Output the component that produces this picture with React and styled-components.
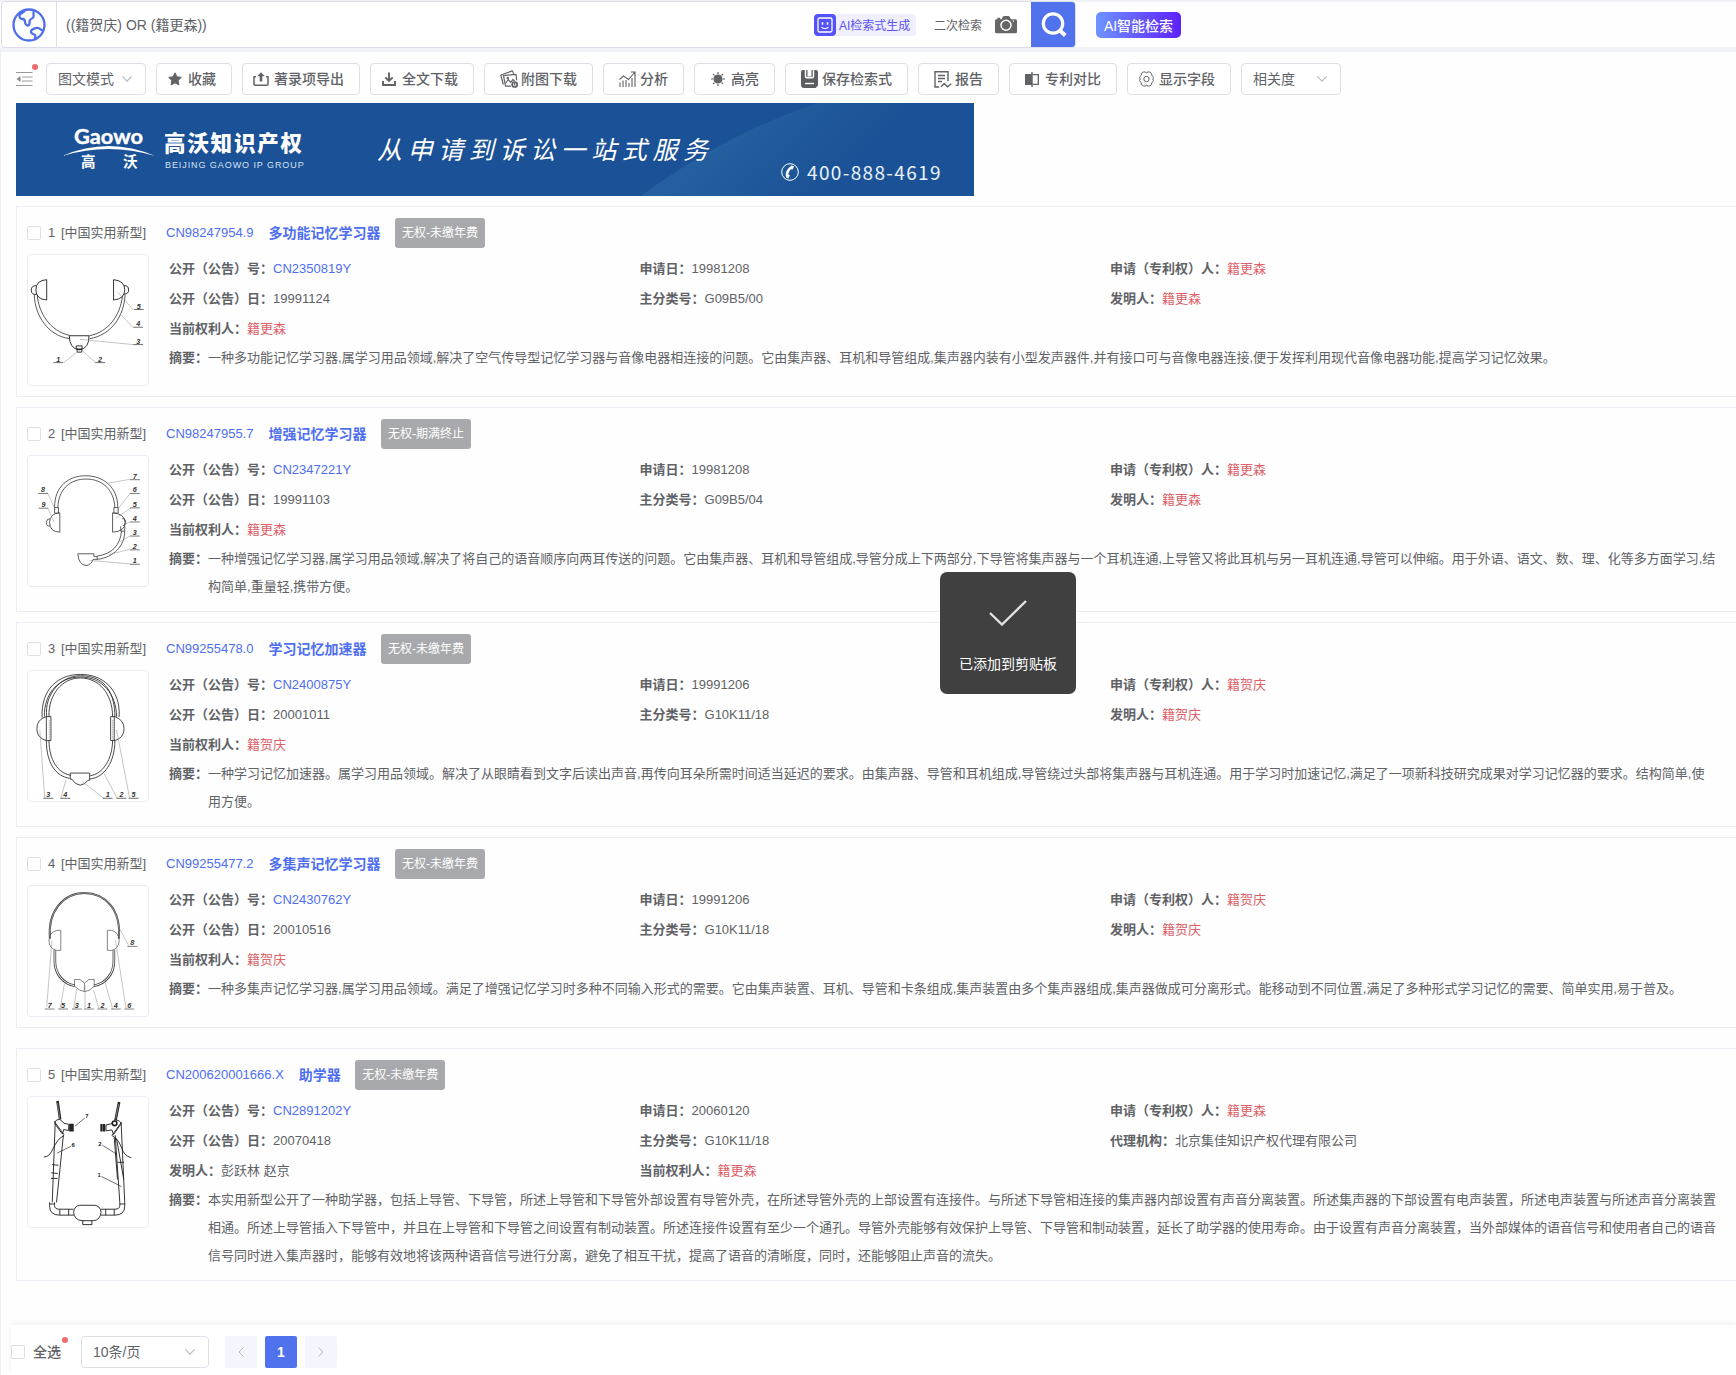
import React from "react";
import styled, { createGlobalStyle } from "styled-components";

const sans = `"Liberation Sans", Arial, "Noto Sans CJK SC", sans-serif`;

const GlobalStyle = createGlobalStyle`
  * { box-sizing: border-box; }
  body { margin: 0; background: #fff; font-family: ${sans}; color: #606266; font-size: 13px; }
`;

const Page = styled.div`
  width: 1736px;
  height: 1375px;
  overflow: hidden;
  position: relative;
  display: flex;
  flex-direction: column;
  background: #fefefe;
`;

/* ---------- search header ---------- */

const Header = styled.header`
  height: 52px;
  flex: none;
  display: flex;
  align-items: flex-start;
  padding: 1px 0 0 1px;
  background: linear-gradient(#f0f1f5 2px, #fefefe 2px, #fefefe 47px, #f1f2f6 47px);
`;

const SearchBox = styled.div`
  width: 1075px;
  height: 47px;
  display: flex;
  align-items: center;
  border: 1px solid #dcdfe9;
  border-radius: 4px;
  background: #fff;
  overflow: hidden;
`;

const GlobeCell = styled.div`
  width: 55px;
  height: 45px;
  flex: none;
  display: flex;
  align-items: center;
  justify-content: center;
  border-right: 1px solid #dcdfe6;
`;

const Query = styled.div`
  flex: 1;
  padding-left: 9px;
  padding-bottom: 1px;
  font-size: 14px;
`;

const AiBadge = styled.div`
  width: 102px;
  height: 22px;
  display: flex;
  align-items: center;
  gap: 3px;
  border-radius: 4px;
  background: #f0effe;
  color: #5a52f5;
  font-size: 12px;
  white-space: nowrap;
`;

const AiLabel = styled.span`
  padding-bottom: 1px;
`;

const SecondSearch = styled.div`
  margin-left: 18px;
  width: 61px;
  font-size: 12px;
  padding-bottom: 1px;
`;

const SearchButton = styled.button`
  width: 44px;
  height: 45px;
  margin-left: 14px;
  padding: 0 0 0 2px;
  border: 0;
  display: flex;
  align-items: center;
  justify-content: center;
  background: #5072ec;
`;

const SmartButton = styled.button`
  width: 85px;
  height: 26px;
  margin: 11px 0 0 20px;
  padding: 0 0 1px;
  border: 0;
  border-radius: 5px;
  color: #fff;
  font: 500 14px ${sans};
  background: linear-gradient(90deg, #6d93ff, #5e21fa);
`;

/* ---------- toolbar ---------- */

const Body = styled.div`
  flex: 1;
  display: flex;
  flex-direction: column;
  border-left: 1px solid #f0f1f5;
`;

const Toolbar = styled.div`
  height: 32px;
  margin: 11px 0 8px 15px;
  display: flex;
  gap: 10px;
`;

const Collapse = styled.div`
  width: 20px;
  position: relative;
  display: flex;
  align-items: center;
`;

const Dot = styled.i`
  position: absolute;
  width: 6px;
  height: 6px;
  border-radius: 50%;
  background: #ee6b6b;
  right: ${(p) => p.$right}px;
  top: ${(p) => p.$top}px;
`;

const ToolButton = styled.button`
  width: ${(p) => p.$w}px;
  height: 32px;
  padding: 0 0 0 ${(p) => p.$pad - 1}px;
  display: flex;
  align-items: center;
  border: 1px solid #dcdfe6;
  border-radius: 4px;
  background: #fff;
  color: #606266;
  font: ${(p) => (p.$plain ? 400 : 500)} 14px ${sans};
  white-space: nowrap;
  svg { flex: none; }
`;

const ToolLabel = styled.span`
  margin-left: ${(p) => p.$gap || 0}px;
  margin-right: ${(p) => p.$end || 0}px;
  padding-bottom: 2px;
`;

/* ---------- banner ---------- */

const Banner = styled.div`
  width: 958px;
  height: 93px;
  margin: 0 0 10px 15px;
  position: relative;
  display: flex;
  color: #fff;
  background: #1b5196;
  flex: none;
`;

const BannerSweep = styled.svg`
  position: absolute;
  inset: 0;
`;

const LogoBlock = styled.div`
  width: 102px;
  margin-left: 46px;
  padding-top: 16px;
  position: relative;
`;

const Brand = styled.div`
  width: 213px;
  padding-top: 26px;
  position: relative;
`;

const BrandName = styled.div`
  font: 900 21.500px/30px ${sans};
  letter-spacing: 1.8px;
  white-space: nowrap;
`;

const BrandSub = styled.div`
  padding-left: 1px;
  font-size: 9px;
  line-height: 12px;
  letter-spacing: 0.92px;
  color: #d5e2f2;
  white-space: nowrap;
`;

const Slogan = styled.div`
  width: 404px;
  padding-top: 29px;
  position: relative;
  font: italic 400 25px/36px ${sans};
  letter-spacing: 5.6px;
  white-space: nowrap;
`;

const Phone = styled.div`
  position: relative;
  align-self: flex-end;
  height: 49px;
  display: flex;
  align-items: center;
  gap: 8px;
  font: 400 19px "Noto Sans CJK SC", sans-serif;
  letter-spacing: 1.35px;
  color: #eaf3fb;
`;

/* ---------- result cards ---------- */

const Card = styled.article`
  margin: 0 0 ${(p) => p.$after || 10}px 15px;
  padding: 11px 0 10px 10px;
  border: 1px solid #ebeef5;
  border-right: 0;
`;

const CardHead = styled.div`
  height: 30px;
  display: flex;
  align-items: center;
  white-space: nowrap;
`;

const Checkbox = styled.span`
  width: 14px;
  height: 14px;
  flex: none;
  border: 1px solid #dcdfe6;
  border-radius: 2px;
  background: #fff;
`;

const Index = styled.span`
  width: 13px;
  margin-left: 7px;
  margin-top: -2px;
`;

const Kind = styled.span`
  width: 105px;
  margin-top: -4px;
`;

const Link = styled.span`
  color: #4e6ef2;
  ${(p) => p.$head && "margin: -2px 15px 0 0;"}
`;

const Title = styled.span`
  color: #4e6ef2;
  font-size: 14px;
  font-weight: 700;
  margin: -2px 14.5px 0 0;
`;

const Status = styled.span`
  width: 90px;
  height: 30px;
  border-radius: 3px;
  background: #a8a9ac;
  color: #fff;
  font-size: 12px;
  line-height: 30px;
  text-align: center;
`;

const CardBody = styled.div`
  display: flex;
  align-items: flex-start;
  margin-top: 6px;
`;

const Thumb = styled.svg`
  width: 122px;
  height: 132px;
  flex: none;
  border: 1px solid #ebeef5;
  border-radius: 4px;
  background: #fff;
`;

const Info = styled.div`
  flex: 1;
  padding-left: 20px;
`;

const Fields = styled.div`
  display: grid;
  grid-template-columns: 470.5px 470.5px 1fr;
  grid-auto-rows: 30px;
  line-height: 30px;
`;

const Field = styled.div`
  white-space: nowrap;
`;

const Label = styled.b`
  font-weight: 700;
`;

const Mark = styled.span`
  color: #dd5f68;
`;

const Abstract = styled.div`
  display: flex;
  line-height: 28px;
`;

const AbstractText = styled.div`
  white-space: pre;
`;

/* ---------- footer ---------- */

const Footer = styled.footer`
  margin: auto 0 0 10px;
  height: 50px;
  padding-top: 11px;
  display: flex;
  align-items: flex-start;
  background: #fff;
  box-shadow: 0 -2px 5px rgba(0, 0, 0, 0.06);
`;

const SelectAll = styled.div`
  width: 70px;
  height: 32px;
  position: relative;
  display: flex;
  align-items: center;
  gap: 8px;
  font-size: 14px;
  font-weight: 500;
`;

const FooterLabel = styled.span`
  padding-bottom: 2px;
`;

const PageSize = styled.div`
  width: 128px;
  height: 32px;
  padding: 0 13px 0 11px;
  margin-right: 16px;
  display: flex;
  align-items: center;
  justify-content: space-between;
  border: 1px solid #dcdfe6;
  border-radius: 4px;
  font-size: 14px;
`;

const PageButton = styled.button`
  width: 32px;
  height: 32px;
  margin-right: 8px;
  padding: 0;
  border: 0;
  border-radius: 2px;
  display: flex;
  align-items: center;
  justify-content: center;
  background: ${(p) => (p.$active ? "#5072ec" : "#f4f6fd")};
  color: #fff;
  font: 700 14px ${sans};
`;

const Toast = styled.div`
  position: absolute;
  left: 940px;
  top: 572px;
  width: 136px;
  height: 122px;
  padding-top: 28px;
  display: flex;
  flex-direction: column;
  align-items: center;
  gap: 28px;
  border-radius: 7px;
  background: #404040;
  color: #fff;
  font-size: 14px;
  line-height: 20px;
`;

/* ---------- icons ---------- */

const Chevron = () => (
  <svg width="10" height="6" viewBox="0 0 10 6" fill="none" stroke="#b4b8c0" strokeWidth="1.1"><path d="M.4.4 5 5.2 9.6.4" /></svg>
);

const Globe = () => (
  <svg width="34" height="34" viewBox="0 0 34 34" fill="none" stroke="#4e6eea" strokeWidth="2.3" strokeLinejoin="round" strokeLinecap="round">
    <circle cx="17" cy="17" r="15.5" />
    <path d="M12.500 2.800c-1.500 2.200-4.500 2.700-5 4.700-.5 2.200 1.200 3.500 3.500 3.500 2 0 1.800 1.500 2 3.500.2 1.900 2.300 3.500 3.800 2.800 1.300-.7.300-3 .9-4.800.6-1.700 4-1.900 4-4.500 0-2-1.300-3 .5-5" />
    <path d="M31 22.500c-2.200.2-2.800-3-6-2.600-3.300.5-6.300 1.800-6 4.300.3 2.400 3.700 1.400 4.300 3.300.5 1.600-.7 2.200-.5 3.700" />
  </svg>
);

const RobotIcon = () => (
  <svg width="22" height="22" viewBox="0 0 22 22" fill="none" stroke="#fff">
    <rect width="22" height="22" rx="4" fill="#5352fb" stroke="none" />
    <rect x="4" y="4" width="14" height="14" rx="1.5" strokeWidth="1.300" />
    <path d="M8.500 8.200v2.600M13.500 8.200v2.600" strokeWidth="1.600" />
    <path d="M7.500 13.200q3.500 2.600 7 0" strokeWidth="1.200" />
  </svg>
);

const CameraIcon = () => (
  <svg width="22" height="18" viewBox="0 0 22 18">
    <path fill="#666" d="M1.500 3.200h.8V1.800h2.900v1.400h1.300L8 .6q.3-.6 1-.6h4.500q.7 0 1 .6l1.500 2.600h4.500q1.500 0 1.500 1.500v11.100q0 1.500-1.500 1.500h-19Q0 17.300 0 15.800V4.700q0-1.500 1.500-1.500z" />
    <circle cx="11" cy="9.300" r="5" fill="none" stroke="#fff" strokeWidth="1.500" />
    <circle cx="18.300" cy="5" r=".8" fill="#fff" />
  </svg>
);

const MagnifierIcon = () => (
  <svg width="26" height="26" viewBox="0 0 26 26" fill="none" stroke="#fff" strokeWidth="3.200">
    <circle cx="12" cy="11.500" r="9.700" /><path d="m18.800 18.500 5.500 5" strokeWidth="4" />
  </svg>
);

const CollapseIcon = () => (
  <svg width="17" height="16" viewBox="0 0 17 16" fill="none" stroke="#999" strokeWidth="1.100">
    <path d="M0 1.500h16.500M6 6h10.500M6 10h10.500M0 14.500h16.500" /><path d="M4.500 5 .5 8l4 3z" fill="#888" stroke="none" />
  </svg>
);

const icons = {
  star: (
    <svg width="14" height="14" viewBox="0 0 14 14"><path fill="#606266" stroke="#606266" strokeLinejoin="round" d="m7 .8 1.900 4 4.400.6-3.200 3 .8 4.500L7 10.800l-3.900 2.100.8-4.500-3.200-3 4.400-.6z" /></svg>
  ),
  exportBox: (
    <svg width="16" height="14" viewBox="0 0 16 14" fill="none" stroke="#606266" strokeWidth="1.500" strokeLinejoin="round">
      <path d="M3 4.700H1v7.500q0 1 1 1h12q1 0 1-1V4.700h-2" /><path d="M8 9.500V3" strokeWidth="2.600" /><path d="M4.300 4.200 8 .2l3.700 4z" fill="#606266" stroke="none" />
    </svg>
  ),
  download: (
    <svg width="14" height="14" viewBox="0 0 14 14" fill="none" stroke="#606266" strokeWidth="1.900">
      <path d="M1 9v4h12V9M7 .500v8M3.300 5.300 7 9l3.700-3.700" />
    </svg>
  ),
  images: (
    <svg width="18" height="18" viewBox="0 0 18 18" fill="none" stroke="#606266" strokeWidth="1.200" strokeLinejoin="round">
      <path d="M3.300 14.500.8 5 3.500 4.300M3.500 4 12.500.9l1.200 3" />
      <path d="M11 16.200H5.500l-2-10.500L16 4.300l.7 6" />
      <path d="m5.500 13.500 2.700-4 2.500 2.800 2.300-2.800 1.500 1.500" /><circle cx="7.700" cy="8" r=".6" />
      <circle cx="14.700" cy="14.500" r="2.500" strokeWidth="1.700" /><path d="M14.700 12v3.500" />
    </svg>
  ),
  chart: (
    <svg width="17" height="17" viewBox="0 0 17 17" fill="none" stroke="#606266" strokeWidth="1.100">
      <path d="M1 16v-4.500M4 16V9.500M7 16V9M10 16v-4M13 16V7M16 16V4.500" /><path d="M.500 8.500 4.500 5l5 3.500L15.500 1.500M12 1h4v4" />
    </svg>
  ),
  sun: (
    <svg width="14" height="14" viewBox="0 0 14 14" stroke="#606266" strokeWidth="1.200">
      <circle cx="7" cy="7" r="4" fill="#606266" /><path d="M7 0v2M7 12v2M0 7h2M12 7h2M2 2l1.400 1.400M10.600 10.600 12 12M2 12l1.400-1.400M10.600 3.400 12 2" />
    </svg>
  ),
  save: (
    <svg width="17" height="18" viewBox="0 0 17 18"><path fill="#5c5e63" d="M2 0h1.800v6.500q0 2 2 2h5.400q2 0 2-2V0H15q2 0 2 2v13.500L14.500 18H3q-3 0-3-3V2q0-2 2-2z" /><path fill="#5c5e63" d="M5.200 0h1.300v6.300h4V0h1.300v6.700H5.200z" /><path d="M4 13.500h9" stroke="#fff" strokeWidth="1.400" /></svg>
  ),
  report: (
    <svg width="18" height="17" viewBox="0 0 18 17" fill="none" stroke="#606266" strokeWidth="1.400">
      <path d="M5 16H1V.8h13V10M4 4.500h7M4 7.500h7M4 10.500h4" /><path d="m7 15.800 3.200-3.300 3.300 3.300 3.800-3" />
    </svg>
  ),
  compare: (
    <svg width="14" height="15" viewBox="0 0 14 15"><path fill="#606266" d="M0 2h6.300V0h1.400v15H6.300v-2H0z" /><path d="M7.500 2.600h5.800v9.800H7.500" fill="none" stroke="#606266" strokeWidth="1.300" /></svg>
  ),
  gear: (
    <svg width="15" height="16" viewBox="0 0 15 16" fill="none" stroke="#606266" strokeWidth="1">
      <circle cx="7.500" cy="8" r="2.700" />
      <path strokeLinejoin="round" d="M4.500 1 6 .9q1.500 1.800 3 0l1.500.1 2.200 1.500q-.5 2.200 1.200 2.900l.5 1q-1.200 1.600 0 3.200l-.5 1q-1.700.7-1.200 2.900L10.500 15 9 15.100q-1.500-1.800-3 0L4.500 15l-2.200-1.500q.5-2.200-1.200-2.900l-.5-1q1.200-1.600 0-3.200l.5-1q1.700-.7 1.200-2.900z" />
    </svg>
  ),
};

const tools = [
  { w: 76, pad: 12, icon: "star", gap: 6, label: "收藏" },
  { w: 118, pad: 11, icon: "exportBox", gap: 5, label: "著录项导出" },
  { w: 104, pad: 12, icon: "download", gap: 6, label: "全文下载" },
  { w: 109, pad: 16, icon: "images", gap: 3, label: "附图下载" },
  { w: 81, pad: 16, icon: "chart", gap: 4, label: "分析" },
  { w: 81, pad: 17, icon: "sun", gap: 6, label: "高亮" },
  { w: 123, pad: 16, icon: "save", gap: 4, label: "保存检索式" },
  { w: 81, pad: 16, icon: "report", gap: 3, label: "报告" },
  { w: 108, pad: 16, icon: "compare", gap: 6, label: "专利对比" },
  { w: 104, pad: 12, icon: "gear", gap: 5, label: "显示字段" },
];

/* ---------- patent drawings ---------- */

const Ref = ({ x, y, children }) => (
  <>
    <text x={x} y={y - 3} fontSize="22" fontStyle="italic" fontWeight="700" textAnchor="middle" fill="#333" stroke="none">{children}</text>
    <path d={`M${x - 15} ${y}h30`} strokeWidth="2" />
  </>
);

const lead = { stroke: "#888", strokeWidth: 1.500 };

const FigureOne = () => (
  <Thumb viewBox="82 163 366 396" fill="none" stroke="#222" strokeWidth="2.800">
    <path d="M139 238v62Q106 298 106 269T139 238zM107 256q-15 0-15 14t15 13M343 238v62q34-3 34-31t-34-31zM375 256q14 0 14 13t-14 13" />
    <path d="M101 283c2 65 42 126 108 135M110 283c4 57 40 112 99 125M378 283c-2 65-42 124-108 135M370 288c-6 57-42 110-101 121" strokeWidth="2.300" />
    <path d="M208 409h60q1 39-29 43-31-3-31-43zM229 440h18v10h-18zM232 450h14v9h-14z" />
    <g {...lead}><path d="M356 276 402 329M366 345l35 38M240 420l163 16M233 458l-42 33M248 455l40 36" /></g>
    <Ref x={420} y={329}>5</Ref><Ref x={418} y={383}>4</Ref><Ref x={418} y={436}>3</Ref><Ref x={174} y={491}>1</Ref><Ref x={302} y={491}>2</Ref>
  </Thumb>
);

const FigureTwo = () => (
  <Thumb viewBox="82 136 366 396" fill="none" stroke="#333" strokeWidth="2.400">
    <path d="M163 293c0-65 42-97 95-97s98 34 98 97M173 293c2-57 38-87 86-87s85 30 88 87M163 293h12v17h-12zM344 293h13v17h-13z" />
    <path d="M179 309v59q-31-1-31-29t31-30zM149 327q-11 0-11 12t11 10M340 309v59q38-2 38-29t-38-30zM369 327q12 0 11 11t-8 10M365 350v15h12v-17" />
    <path d="M377 365c0 44-32 80-84 86M367 365c-3 42-29 70-74 76M234 434h49v8h10v9h-12q-5 16-22 19-23-3-25-36z" />
    <g {...lead}><path d="m325 219 67-12M352 303l42-54M350 325l46-31M373 348l20-12M362 398l32-19M330 436l64-16M270 454l124 11M142 249l24 52M142 295l20 42" /></g>
    {[[7, 208], [6, 250], [5, 294], [4, 337], [3, 380], [2, 422], [1, 466]].map(([n, y]) => <Ref key={n} x={408} y={y}>{n}</Ref>)}
    <Ref x={128} y={250}>8</Ref><Ref x={129} y={295}>9</Ref>
  </Thumb>
);

const FigureThree = () => (
  <Thumb viewBox="82 151 366 396" fill="none" stroke="#222" strokeWidth="2.500">
    <path d="M125 293C121 205 175 161 242 161s123 45 118 130M132 290c-2-70 43-121 110-121s110 54 110 121M139 290c-8-67 43-125 103-125 80 0 105 60 105 125M146 290c-2-68 40-118 96-118s98 48 98 118" />
    <path d="M152 290v73h-14q-29-8-29-36t28-37zM138 363v-73M334 290v73h13q28-9 28-36t-28-37zM345 290v73" />
    <path d="M138 363c0 67 28 109 71 115M146 363c1 60 26 98 66 106M347 363c0 65-32 113-76 117M340 363c-1 58-30 102-68 107" />
    <path d="M211 462h59v22h-5q-8 13-24 15-17-3-25-18h-5z" />
    <path d="M147 300v60M340 300v60" strokeWidth="1" strokeDasharray="5 2" />
    <g {...lead}><path d="m118 330 15 209M198 482l-16 57M248 488l65 51M310 456l44 83M352 330l40 209" /></g>
    {[[3, 144], [4, 196], [1, 325], [2, 367], [5, 404]].map(([n, x]) => <Ref key={n} x={x} y={539}>{n}</Ref>)}
  </Thumb>
);

const FigureFour = () => (
  <Thumb viewBox="82 136 366 396" fill="none" stroke="#444" strokeWidth="2">
    <path d="M149 296c-8-84 42-139 105-139s113 51 105 139" strokeWidth="6" /><path d="M149 296c-8-84 42-139 105-139s113 51 105 139" stroke="#bbb" strokeWidth="2" />
    <path d="M182 271v61h-13q-23-6-23-30t24-31zM324 271v61h14q22-6 22-30t-23-31z" />
    <path d="M164 331v34c0 38 25 69 61 75M344 331v34c0 38-25 69-61 75" strokeWidth="8" /><path d="M164 331v34c0 38 25 69 61 75M344 331v34c0 38-25 69-61 75" stroke="#fff" strokeWidth="3" />
    <path d="M224 421h17l13 11 14-11h16v20q-13 16-29 17-17-2-31-17zM254 432v26" />
    <g {...lead}><path d="m155 303-16 202M193 434l-13 76M230 450l-8 60M256 438v72M282 453l16 57M317 430l23 80M349 302l32 208M361 265l28 53" /></g>
    {[[7, 148], [5, 189], [3, 231], [1, 268], [2, 309], [4, 350], [6, 391]].map(([n, x]) => <Ref key={n} x={x} y={511}>{n}</Ref>)}
    <Ref x={400} y={320}>8</Ref>
  </Thumb>
);

const FigureFive = () => (
  <Thumb viewBox="82 169 366 396" fill="none" stroke="#222" strokeWidth="2.800">
    <path d="M172 181l8 56M360 184l-11 55" strokeWidth="8" /><path d="M172 187l7 49M359 190l-10 46" stroke="#aaa" strokeWidth="2" />
    <path d="M165 246 156 490M190 285l-21 205M348 285l14 205M366 246l11 244M155 375l20 2M153 400l20 2M152 417h20M355 368h20" />
    <path d="M179 237q-18 1-14 15l22 30 4-14 15 3v-19q-15 1-27-15zM349 239q17 1 16 13l-22 31-5-14-18 3v-18q15 1 29-15z" />
    <path d="M218 250v24M211 250v24M306 251v23M314 251v23" strokeWidth="7" /><circle cx="346" cy="249" r="7" strokeWidth="5" />
    <path d="M162 243 192 284M192 286c-36 17-32 67-62 66M367 246l-29 40M338 286c38 22 22 59 59 68M352 295l22 125M345 293l10 127" />
    <path d="M148 490v12q0 27 30 27h44M163 490v10q0 11 15 11h43M377 490v12q0 27-30 27h-43M362 490v10q0 11-15 11h-43M148 495h16M362 495h16M179 511v18M206 511v18M319 511v18M345 511v18" />
    <path d="M221 520q3-20 19-21h45q17 1 20 21-3 25-24 26h-34q-24-2-26-26zM249 546v12h28v-12" />
    <path d="m225 258 30-25M171 340l42-21M309 316l45 28M306 411l61 31" strokeWidth="2" />
    <g fontSize="18" fontWeight="700" fill="#222" stroke="none"><text x="257" y="233">7</text><text x="215" y="320">6</text><text x="296" y="317">2</text><text x="294" y="412">1</text></g>
  </Thumb>
);

/* ---------- data ---------- */

const common = (pub, pubDate, appDate, ipc, person) => [
  ["公开（公告）号：", pub, "link"], ["申请日：", appDate], ["申请（专利权）人：", person, "mark"],
  ["公开（公告）日：", pubDate], ["主分类号：", ipc], ["发明人：", person, "mark"],
  ["当前权利人：", person, "mark"],
];

const patents = [
  {
    code: "CN98247954.9", title: "多功能记忆学习器", status: "无权-未缴年费", Figure: FigureOne,
    fields: common("CN2350819Y", "19991124", "19981208", "G09B5/00", "籍更森"),
    text: ["一种多功能记忆学习器,属学习用品领域,解决了空气传导型记忆学习器与音像电器相连接的问题。它由集声器、耳机和导管组成,集声器内装有小型发声器件,并有接口可与音像电器连接,便于发挥利用现代音像电器功能,提高学习记忆效果。"],
  },
  {
    code: "CN98247955.7", title: "增强记忆学习器", status: "无权-期满终止", Figure: FigureTwo,
    fields: common("CN2347221Y", "19991103", "19981208", "G09B5/04", "籍更森"),
    text: ["一种增强记忆学习器,属学习用品领域,解决了将自己的语音顺序向两耳传送的问题。它由集声器、耳机和导管组成,导管分成上下两部分,下导管将集声器与一个耳机连通,上导管又将此耳机与另一耳机连通,导管可以伸缩。用于外语、语文、数、理、化等多方面学习,结", "构简单,重量轻,携带方便。"],
  },
  {
    code: "CN99255478.0", title: "学习记忆加速器", status: "无权-未缴年费", Figure: FigureThree,
    fields: common("CN2400875Y", "20001011", "19991206", "G10K11/18", "籍贺庆"),
    text: ["一种学习记忆加速器。属学习用品领域。解决了从眼睛看到文字后读出声音,再传向耳朵所需时间适当延迟的要求。由集声器、导管和耳机组成,导管绕过头部将集声器与耳机连通。用于学习时加速记忆,满足了一项新科技研究成果对学习记忆器的要求。结构简单,使", "用方便。"],
  },
  {
    code: "CN99255477.2", title: "多集声记忆学习器", status: "无权-未缴年费", Figure: FigureFour, after: 20,
    fields: common("CN2430762Y", "20010516", "19991206", "G10K11/18", "籍贺庆"),
    text: ["一种多集声记忆学习器,属学习用品领域。满足了增强记忆学习时多种不同输入形式的需要。它由集声装置、耳机、导管和卡条组成,集声装置由多个集声器组成,集声器做成可分离形式。能移动到不同位置,满足了多种形式学习记忆的需要、简单实用,易于普及。"],
  },
  {
    code: "CN200620001666.X", title: "助学器", status: "无权-未缴年费", Figure: FigureFive,
    fields: [
      ["公开（公告）号：", "CN2891202Y", "link"], ["申请日：", "20060120"], ["申请（专利权）人：", "籍更森", "mark"],
      ["公开（公告）日：", "20070418"], ["主分类号：", "G10K11/18"], ["代理机构：", "北京集佳知识产权代理有限公司"],
      ["发明人：", "彭跃林 赵京"], ["当前权利人：", "籍更森", "mark"],
    ],
    text: ["本实用新型公开了一种助学器，包括上导管、下导管，所述上导管和下导管外部设置有导管外壳，在所述导管外壳的上部设置有连接件。与所述下导管相连接的集声器内部设置有声音分离装置。所述集声器的下部设置有电声装置，所述电声装置与所述声音分离装置", "相通。所述上导管插入下导管中，并且在上导管和下导管之间设置有制动装置。所述连接件设置有至少一个通孔。导管外壳能够有效保护上导管、下导管和制动装置，延长了助学器的使用寿命。由于设置有声音分离装置，当外部媒体的语音信号和使用者自己的语音", "信号同时进入集声器时，能够有效地将该两种语音信号进行分离，避免了相互干扰，提高了语音的清晰度，同时，还能够阻止声音的流失。"],
  },
];

const Value = ({ type, children }) => {
  if (type === "link") return <Link>{children}</Link>;
  if (type === "mark") return <Mark>{children}</Mark>;
  return <span>{children}</span>;
};

const PatentCard = ({ index, item }) => (
  <Card $after={item.after}>
    <CardHead>
      <Checkbox />
      <Index>{index}</Index>
      <Kind>[中国实用新型]</Kind>
      <Link $head>{item.code}</Link>
      <Title>{item.title}</Title>
      <Status>{item.status}</Status>
    </CardHead>
    <CardBody>
      <item.Figure />
      <Info>
        <Fields>
          {item.fields.map(([label, value, type]) => (
            <Field key={label}><Label>{label}</Label><Value type={type}>{value}</Value></Field>
          ))}
        </Fields>
        <Abstract>
          <Label>摘要：</Label>
          <AbstractText>{item.text.join("\n")}</AbstractText>
        </Abstract>
      </Info>
    </CardBody>
  </Card>
);

const GaowoLogo = () => (
  <svg width="94" height="58" viewBox="0 0 94 58" fill="#fff">
    <text x="12" y="25" fontFamily="Lato, sans-serif" fontWeight="700" fontSize="20" textLength="69" lengthAdjust="spacingAndGlyphs" stroke="#fff" strokeWidth=".4">Gaowo</text>
    <path d="M0 37Q47 17 93 37 47 23 0 37z" />
    <text x="19" y="48" fontFamily="Noto Sans CJK SC, sans-serif" fontWeight="700" fontSize="14.500">高</text>
    <text x="61" y="48" fontFamily="Noto Sans CJK SC, sans-serif" fontWeight="700" fontSize="14.500">沃</text>
  </svg>
);

export default function App() {
  return (
    <Page>
      <GlobalStyle />
      <Header>
        <SearchBox>
          <GlobeCell><Globe /></GlobeCell>
          <Query>((籍贺庆) OR (籍更森))</Query>
          <AiBadge><RobotIcon /><AiLabel>AI检索式生成</AiLabel></AiBadge>
          <SecondSearch>二次检索</SecondSearch>
          <CameraIcon />
          <SearchButton><MagnifierIcon /></SearchButton>
        </SearchBox>
        <SmartButton>AI智能检索</SmartButton>
      </Header>
      <Body>
        <Toolbar>
          <Collapse><CollapseIcon /><Dot $right={-2} $top={1} /></Collapse>
          <ToolButton $w={100} $pad={12} $plain><ToolLabel $end={8}>图文模式</ToolLabel><Chevron /></ToolButton>
          {tools.map((t) => (
            <ToolButton key={t.label} $w={t.w} $pad={t.pad}>{icons[t.icon]}<ToolLabel $gap={t.gap}>{t.label}</ToolLabel></ToolButton>
          ))}
          <ToolButton $w={100} $pad={12} $plain><ToolLabel $end={22}>相关度</ToolLabel><Chevron /></ToolButton>
        </Toolbar>
        <Banner>
          <BannerSweep width="958" height="93" viewBox="0 0 958 93">
            <defs>
              <linearGradient id="sweep" gradientUnits="userSpaceOnUse" x1="710" y1="30" x2="790" y2="110">
                <stop offset="0" stopColor="#24609f" /><stop offset="1" stopColor="#1b5196" />
              </linearGradient>
            </defs>
            <path d="M625 93Q710 30 802 0H958V93z" fill="url(#sweep)" />
          </BannerSweep>
          <LogoBlock><GaowoLogo /></LogoBlock>
          <Brand>
            <BrandName>高沃知识产权</BrandName>
            <BrandSub>BEIJING GAOWO IP GROUP</BrandSub>
          </Brand>
          <Slogan>从申请到诉讼一站式服务</Slogan>
          <Phone>
            <svg width="18" height="18" viewBox="0 0 18 18">
              <circle cx="9" cy="9" r="8.300" fill="none" stroke="#fff" strokeWidth="1" />
              <path fill="#fff" d="M10.500 2.500 13 3.200 11.600 6.500 9.700 6.200Q7.500 8.700 7.300 11.500l1.500.7-1.500 3.200-2.300-1Q3.300 7.500 10.500 2.500z" />
            </svg>
            400-888-4619
          </Phone>
        </Banner>
        {patents.map((p, i) => <PatentCard key={p.code} index={i + 1} item={p} />)}
        <Footer>
          <SelectAll><Checkbox /><FooterLabel>全选</FooterLabel><Dot $right={13} $top={1} /></SelectAll>
          <PageSize><FooterLabel>10条/页</FooterLabel><Chevron /></PageSize>
          <PageButton><svg width="6" height="10" viewBox="0 0 6 10" fill="none" stroke="#b4b8c0"><path d="M5.500.5 1 5l4.500 4.500" /></svg></PageButton>
          <PageButton $active>1</PageButton>
          <PageButton><svg width="6" height="10" viewBox="0 0 6 10" fill="none" stroke="#b4b8c0"><path d="M.5.500 5 5 .500 9.500" /></svg></PageButton>
        </Footer>
      </Body>
      <Toast>
        <svg width="38" height="26" viewBox="0 0 38 26" fill="none" stroke="#e2e2e2" strokeWidth="2.400"><path d="m1 13 12 11.500L37 1" /></svg>
        已添加到剪贴板
      </Toast>
    </Page>
  );
}
